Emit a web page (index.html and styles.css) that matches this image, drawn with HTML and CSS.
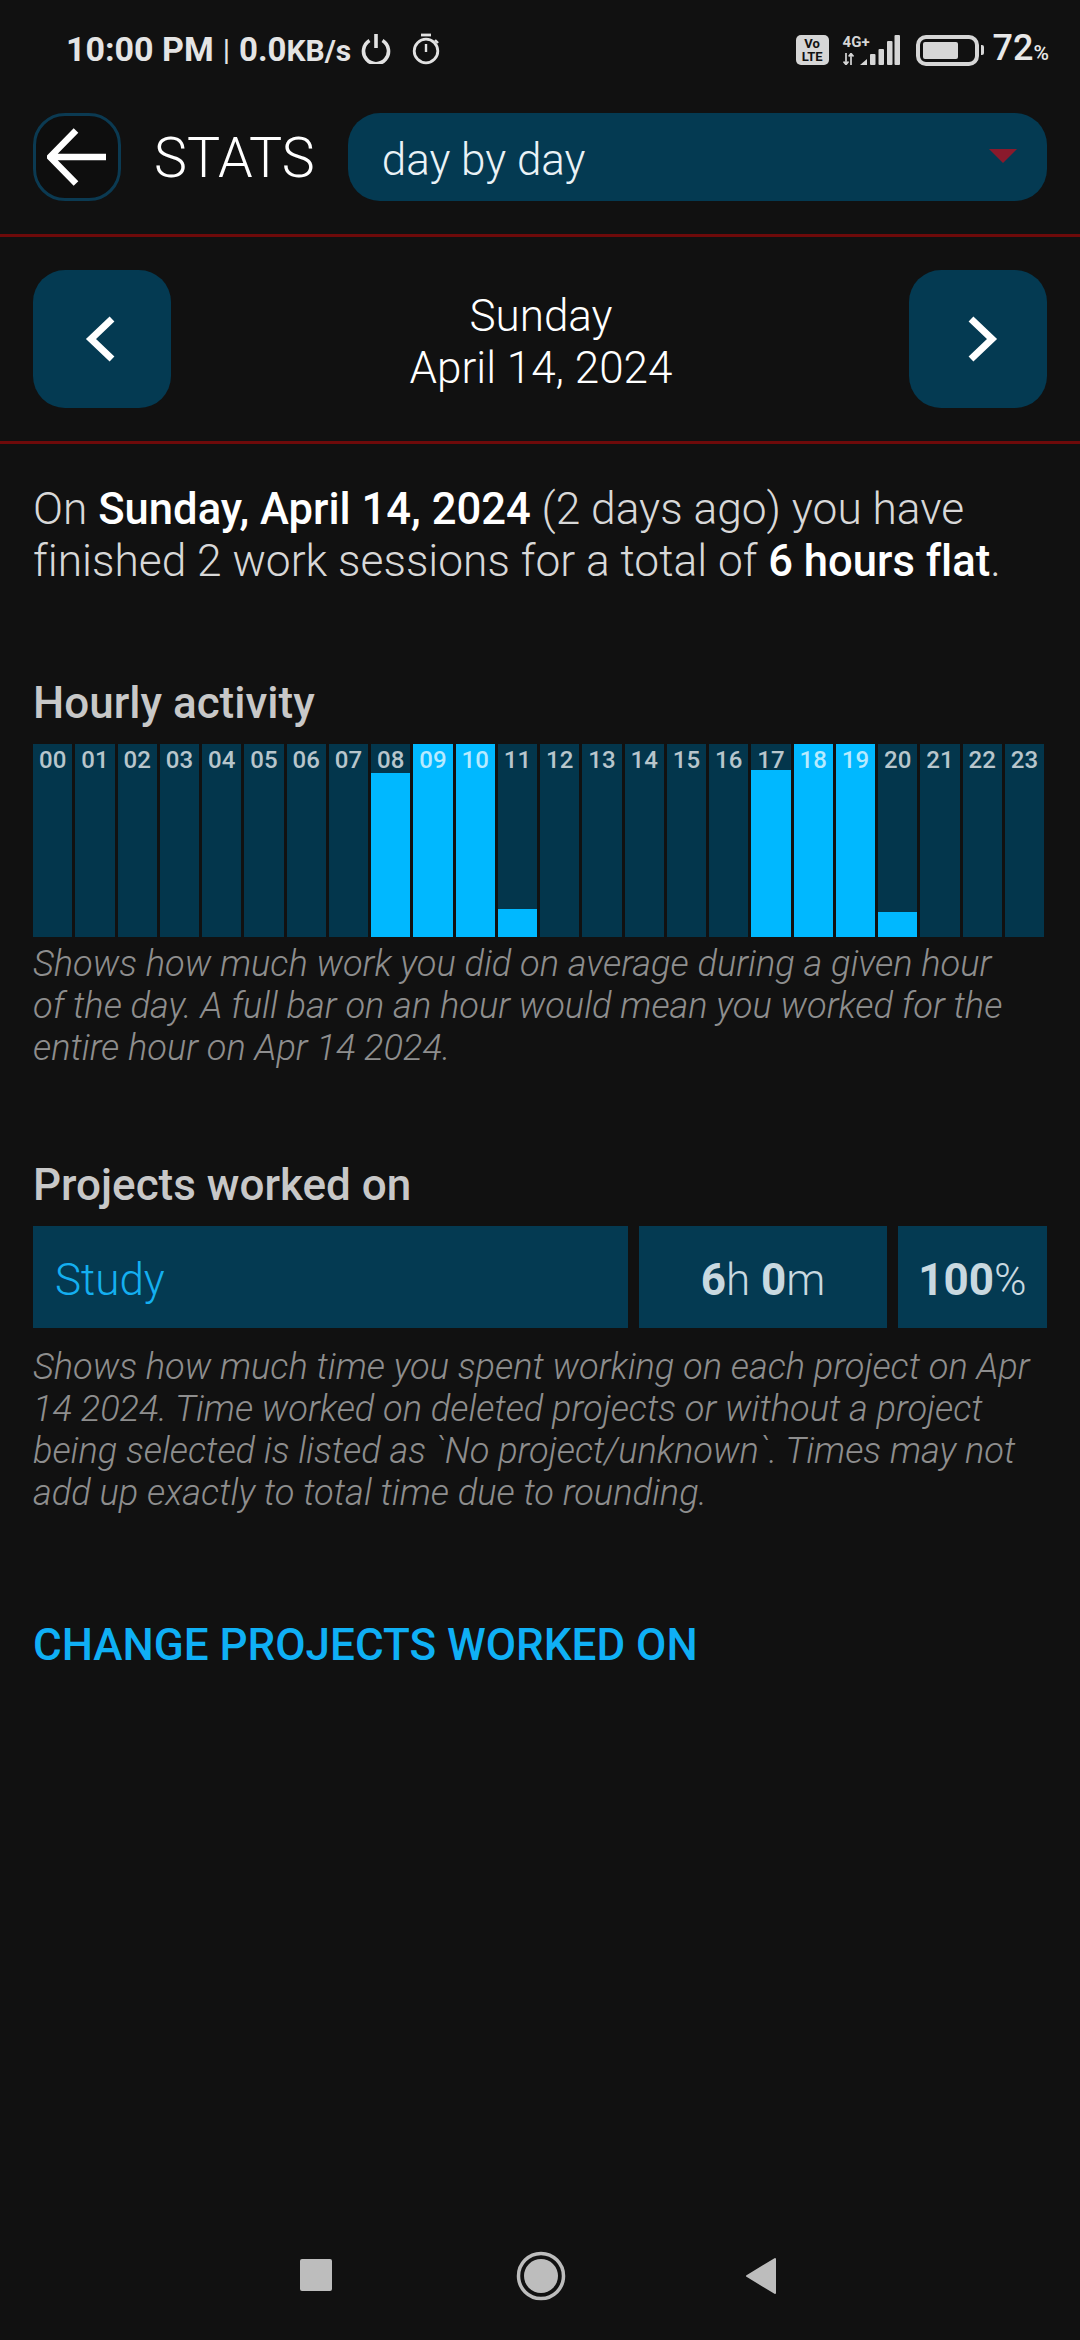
FILE: index.html
```html
<!DOCTYPE html>
<html lang="en">
<head>
<meta charset="utf-8">
<title>Stats</title>
<link rel="stylesheet" href="styles.css">
</head>
<body>
<div class="screen">
  <div class="status">
    <div class="status-left">
      <span class="clock">10:00 PM</span><span class="pipe">|</span><span class="speed">0.0<span class="unit">KB/s</span></span>
      <svg class="ic-power" viewBox="0 0 30 30" width="30" height="30"><path d="M8.500 6.500a12.500 12.500 0 1 0 13 0" fill="none" stroke="#e2e2e2" stroke-width="3.600"/><path d="M15 0v14" stroke="#e2e2e2" stroke-width="3.600"/></svg>
      <svg class="ic-timer" viewBox="0 0 28 32" width="28" height="32"><path d="M9 2h10" stroke="#e2e2e2" stroke-width="2.800"/><circle cx="14" cy="18" r="11.800" fill="none" stroke="#e2e2e2" stroke-width="2.800"/><path d="M14 11v8" stroke="#e2e2e2" stroke-width="2.400"/><path d="M23 7l3 3" stroke="#e2e2e2" stroke-width="2.400"/></svg>
    </div>
    <div class="status-right">
      <div class="volte"><span>Vo</span><span>LTE</span></div>
      <div class="net">
        <span class="net-type">4G+</span>
        <svg class="ic-data" viewBox="0 0 12 12" width="12" height="12"><path d="M3 0v11M0.500 8.500L3 11.500 5.500 8.500M8 12V1M5.700 3.500L8 0.500 10.500 3.500" fill="none" stroke="#d6d6d6" stroke-width="1.700"/></svg>
      </div>
      <svg class="ic-signal" viewBox="0 0 40 30" width="40" height="30"><path d="M0 30L7 24V30Z" fill="#d6d6d6"/><rect x="10" y="19" width="5.500" height="11" rx="1" fill="#d6d6d6"/><rect x="18.500" y="14" width="5.500" height="16" rx="1" fill="#d6d6d6"/><rect x="27" y="6" width="5.500" height="24" rx="1" fill="#d6d6d6"/><rect x="34.500" y="0" width="5.500" height="30" rx="1" fill="#d6d6d6"/></svg>
      <div class="battery"><div class="battery-body"><div class="battery-level"></div></div><div class="battery-nub"></div></div>
      <span class="pct">72<small>%</small></span>
    </div>
  </div>

  <header class="toolbar">
    <button class="back" type="button" aria-label="Back">
      <svg viewBox="0 0 60 60" width="60" height="60"><path d="M59 30H5M29 3.500L3 30l26 26.500" fill="none" stroke="#fff" stroke-width="6.500"/></svg>
    </button>
    <h1 class="title">STATS</h1>
    <div class="select">
      <span>day by day</span>
      <svg viewBox="0 0 28 14" width="28" height="14"><path d="M0 0h28L14 14z" fill="#8a1a2c"/></svg>
    </div>
  </header>

  <nav class="datebar">
    <button class="nav-btn" type="button" aria-label="Previous">
      <svg class="chev-prev" viewBox="0 0 30 46" width="30" height="46"><path d="M27 3L6 23l21 20" fill="none" stroke="#fff" stroke-width="7"/></svg>
    </button>
    <div class="date"><div>Sunday</div><div>April 14, 2024</div></div>
    <button class="nav-btn" type="button" aria-label="Next">
      <svg class="chev-next" viewBox="0 0 30 46" width="30" height="46"><path d="M3 3l21 20L3 43" fill="none" stroke="#fff" stroke-width="7"/></svg>
    </button>
  </nav>

  <main class="content">
    <p class="summary">On <b>Sunday, April 14, 2024</b> (2 days ago) you have finished 2 work sessions for a total of <b>6 hours flat</b>.</p>

    <h2 class="heading h-hourly">Hourly activity</h2>
    <div class="chart">
      <div class="bar"><span>00</span></div>
      <div class="bar"><span>01</span></div>
      <div class="bar"><span>02</span></div>
      <div class="bar"><span>03</span></div>
      <div class="bar"><span>04</span></div>
      <div class="bar"><span>05</span></div>
      <div class="bar"><span>06</span></div>
      <div class="bar"><span>07</span></div>
      <div class="bar"><i style="height:85%"></i><span>08</span></div>
      <div class="bar"><i style="height:100%"></i><span>09</span></div>
      <div class="bar"><i style="height:100%"></i><span>10</span></div>
      <div class="bar"><i style="height:14.500%"></i><span>11</span></div>
      <div class="bar"><span>12</span></div>
      <div class="bar"><span>13</span></div>
      <div class="bar"><span>14</span></div>
      <div class="bar"><span>15</span></div>
      <div class="bar"><span>16</span></div>
      <div class="bar"><i style="height:86.500%"></i><span>17</span></div>
      <div class="bar"><i style="height:100%"></i><span>18</span></div>
      <div class="bar"><i style="height:100%"></i><span>19</span></div>
      <div class="bar"><i style="height:13%"></i><span>20</span></div>
      <div class="bar"><span>21</span></div>
      <div class="bar"><span>22</span></div>
      <div class="bar"><span>23</span></div>
    </div>
    <p class="note">Shows how much work you did on average during a given hour<br>of the day. A full bar on an hour would mean you worked for the entire hour on Apr 14 2024.</p>

    <h2 class="heading h-projects">Projects worked on</h2>
    <div class="project">
      <div class="cell cell-name">Study</div>
      <div class="cell cell-time"><b>6</b>h <b>0</b>m</div>
      <div class="cell cell-pct"><b>100</b>%</div>
    </div>
    <p class="note note-projects">Shows how much time you spent working on each project on Apr 14 2024. Time worked on deleted projects or without a project being selected is listed as `No project/unknown`. Times may not add up exactly to total time due to rounding.</p>

    <a class="change" href="#">CHANGE PROJECTS WORKED ON</a>
  </main>

  <footer class="sysnav">
    <svg viewBox="0 0 32 32" width="32" height="32"><rect width="32" height="32" rx="2" fill="#bdbdbd"/></svg>
    <svg viewBox="0 0 50 50" width="50" height="50"><circle cx="25" cy="25" r="22.500" fill="none" stroke="#bdbdbd" stroke-width="3.500"/><circle cx="25" cy="25" r="17" fill="#bdbdbd"/></svg>
    <svg viewBox="0 0 32 38" width="32" height="38"><path d="M30 2v34L2 19z" fill="#bdbdbd" stroke="#bdbdbd" stroke-width="2" stroke-linejoin="round"/></svg>
  </footer>
</div>
</body>
</html>
```
FILE: styles.css
```css
* { box-sizing: border-box; }
html, body { margin: 0; padding: 0; background: #111; }
body { font-family: Roboto, "Liberation Sans", sans-serif; color: #fff; }
.screen { width: 1080px; height: 2340px; display: flex; flex-direction: column; background: #111; overflow: hidden; }

.status { height: 113px; padding: 32px 31px 0 66px; display: flex; justify-content: space-between; align-items: flex-start; color: #e4e4e4; }
.status-left { display: flex; align-items: center; height: 34px; }
.clock { font-size: 34px; font-weight: 700; }
.pipe { font-size: 30px; margin: 0 9px 0 9px; font-weight: 400; }
.speed { font-size: 33px; font-weight: 700; }
.unit { font-size: 30px; }
.ic-power { margin-left: 10px; }
.ic-timer { margin-left: 21px; }
.status-right { display: flex; align-items: center; height: 32px; margin-top: 2px; }
.volte { width: 33px; height: 30px; background: #d6d6d6; border-radius: 5px; color: #111; display: flex; flex-direction: column; align-items: center; justify-content: center; font-size: 13px; font-weight: 700; line-height: 13px; }
.net { width: 32px; height: 30px; margin-left: 14px; display: flex; flex-direction: column; justify-content: space-between; }
.net-type { font-size: 15px; line-height: 14px; font-weight: 700; color: #d6d6d6; white-space: nowrap; }
.ic-data { display: block; }
.ic-signal { margin-left: -15px; }
.battery { margin-left: 16px; display: flex; align-items: center; }
.battery-body { width: 63px; height: 31px; border: 4px solid #d6d6d6; border-radius: 10px; padding: 3px; }
.battery-level { width: 35px; height: 100%; background: #d6d6d6; border-radius: 2px; }
.battery-nub { width: 3px; height: 10px; margin-left: 2px; background: #d6d6d6; border-radius: 0 2px 2px 0; }
.pct { margin-left: 9px; font-size: 36px; font-weight: 500; color: #e8e8e8; line-height: 32px; white-space: nowrap; }
.pct small { font-size: 21px; }

.toolbar { height: 124px; padding: 0 33px; display: flex; align-items: flex-start; border-bottom: 3px solid #6e0a0a; }
.back { width: 88px; height: 88px; padding: 0; background: #0e0e0e; border: 3px solid #0b3a52; border-radius: 32px; display: flex; align-items: center; justify-content: center; }
.title { margin: 0 0 0 33px; font-size: 55.500px; font-weight: 300; line-height: 92px; color: #fff; }
.select { margin-left: 33px; flex: 1; height: 88px; padding: 0 30px 0 34px; background: #043a52; border-radius: 32px; display: flex; align-items: center; justify-content: space-between; font-size: 44px; font-weight: 300; color: #eaf2f6; }
.select span { margin-top: 5px; }
.select svg { margin-bottom: 2px; }

.datebar { height: 207px; padding: 33px 33px 0; display: flex; align-items: flex-start; justify-content: space-between; border-bottom: 3px solid #6e0a0a; }
.nav-btn { width: 138px; height: 138px; padding: 0; border: 0; background: #043a52; border-radius: 32px; display: flex; align-items: center; justify-content: center; }
.chev-prev { margin-right: 5px; }
.chev-next { margin-left: 10px; }
.date { padding: 20px 0 0 2px; text-align: center; font-size: 44px; line-height: 52px; font-weight: 300; color: #fff; }

.content { padding: 39px 33px 0; flex: 1; }
.summary { margin: 0; font-size: 44.300px; line-height: 52px; font-weight: 300; color: #d8d8d8; font-variant-ligatures: none; }
.summary b { font-size: 43.600px; line-height: 40px; font-weight: 500; color: #fff; }
.heading { margin: 0; font-size: 44px; font-weight: 500; line-height: 48px; color: #c8c8c8; }
.h-hourly { margin-top: 92px; }
.h-projects { margin-top: 92px; }

.chart { margin-top: 17px; margin-right: 3px; height: 193px; display: grid; grid-template-columns: repeat(24, 1fr); column-gap: 3px; }
.bar { display: grid; background: #03364c; height: 193px; }
.bar i { grid-area: 1 / 1; align-self: end; display: block; background: #00b8ff; }
.bar span { grid-area: 1 / 1; align-self: start; text-align: center; font-size: 24px; line-height: 30px; padding-top: 1px; font-weight: 500; color: rgba(255, 255, 255, 0.72); }

.note { margin: 6px 0 0; font-size: 36.200px; line-height: 42px; font-weight: 300; font-style: italic; color: #8e8e8e; }
.note-projects { margin-top: 18px; }

.project { margin-top: 17px; height: 102px; display: flex; gap: 11px; }
.cell { background: #043a52; display: flex; align-items: center; height: 102px; padding-top: 5px; font-size: 44px; font-weight: 300; color: #c9d9e0; white-space: pre; }
.cell b { font-weight: 700; }
.cell-name { flex: 1; padding-left: 22px; color: #14aff0; }
.cell-time { width: 248px; justify-content: center; }
.cell-pct { width: 149px; justify-content: center; }

.change { display: block; margin-top: 105px; font-size: 44px; line-height: 52px; font-weight: 500; color: #0fb0f5; text-decoration: none; }

.sysnav { height: 81px; padding: 0 0 0 300px; display: flex; align-items: flex-start; }
.sysnav svg:nth-child(2) { margin-left: 184px; margin-top: -8px; }
.sysnav svg:nth-child(3) { margin-left: 179px; margin-top: -2px; }
```
